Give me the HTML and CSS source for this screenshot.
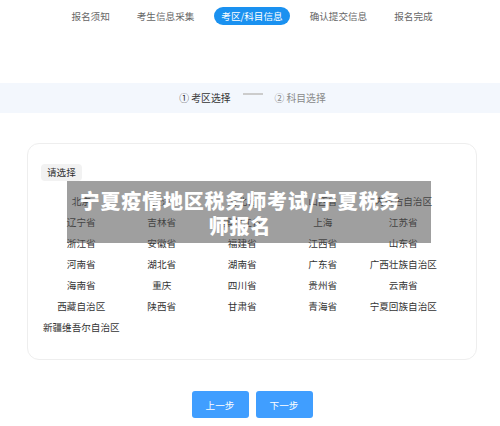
FILE: index.html
```html
<!DOCTYPE html>
<html lang="zh-CN">
<head>
    <meta charset="UTF-8">
    <meta name="viewport" content="width=device-width, initial-scale=1.0">
    <title>考区/科目信息</title>
    <link rel="stylesheet" href="styles.css">
</head>
<body>
    <!-- 报名流程 -->
    <div class="steps">
        <span class="step">报名须知</span>
        <span class="step">考生信息采集</span>
        <span class="step active">考区/科目信息</span>
        <span class="step">确认提交信息</span>
        <span class="step">报名完成</span>
    </div>

    <!-- 子步骤 -->
    <div class="substeps">
        <span class="sub current">① 考区选择</span>
        <span class="sub-line"></span>
        <span class="sub">② 科目选择</span>
    </div>

    <div class="card">
        <div class="chip">请选择</div>
        <div class="areas">
            <span>北京</span><span>天津</span><span>河北省</span><span>山西省</span><span>内蒙古自治区</span>
            <span>辽宁省</span><span>吉林省</span><span>黑龙江省</span><span>上海</span><span>江苏省</span>
            <span>浙江省</span><span>安徽省</span><span>福建省</span><span>江西省</span><span>山东省</span>
            <span>河南省</span><span>湖北省</span><span>湖南省</span><span>广东省</span><span>广西壮族自治区</span>
            <span>海南省</span><span>重庆</span><span>四川省</span><span>贵州省</span><span>云南省</span>
            <span>西藏自治区</span><span>陕西省</span><span>甘肃省</span><span>青海省</span><span>宁夏回族自治区</span>
            <span>新疆维吾尔自治区</span>
        </div>
        <div class="banner">
            <h1>宁夏疫情地区税务师考试/宁夏税务师报名</h1>
        </div>
    </div>

    <div class="controls">
        <button class="btn">上一步</button>
        <button class="btn">下一步</button>
    </div>
</body>
</html>
```

FILE: styles.css
```css
body {
    margin: 0;
    padding: 0;
    background: #fff;
    font-family: "Noto Sans CJK SC", "Noto Sans", sans-serif;
    font-size: 9.6px;
    color: #333;
}

.steps {
    display: flex;
    justify-content: center;
    align-items: center;
    gap: 13px;
    height: 32px;
    padding-left: 4px;
    margin-bottom: 51px;
}

.step {
    padding: 0 7px;
    height: 18px;
    line-height: 18px;
    color: #666;
    border-radius: 9px;
}

.step.active {
    background-color: #1a91f0;
    color: #fff;
}

.substeps {
    display: flex;
    justify-content: center;
    align-items: center;
    gap: 12px;
    height: 30px;
    background-color: #f3f7fd;
    padding-left: 5px;
}

.sub {
    color: #888;
    font-size: 9.8px;
}

.sub.current {
    color: #333;
}

.sub-line {
    width: 20px;
    height: 2px;
    background-color: #ccc;
    margin-bottom: 8px;
}

.card {
    position: relative;
    margin: 30px 0 0 27px;
    width: 450px;
    height: 217px;
    box-sizing: border-box;
    border: 1px solid #eee;
    border-radius: 12px;
    padding: 20px 0 0 13px;
}

.chip {
    display: inline-block;
    height: 17px;
    line-height: 17px;
    padding: 0 6px;
    background-color: #f2f2f2;
    border-radius: 4px;
    color: #333;
}

.areas {
    display: grid;
    grid-template-columns: repeat(5, 80.5px);
    grid-auto-rows: 21px;
    margin-top: 10px;
}

.areas span {
    text-align: center;
    line-height: 21px;
    white-space: nowrap;
}

/* 标题遮罩 */
.banner {
    position: absolute;
    left: 39px;
    top: 37px;
    width: 364px;
    height: 62px;
    box-sizing: border-box;
    padding: 2px 28px 0 10px;
    background: rgba(80, 80, 80, 0.55);
    display: flex;
    align-items: center;
}

.banner h1 {
    margin: 0;
    width: 100%;
    text-align: center;
    color: #fff;
    font-size: 20px;
    font-weight: 900;
    line-height: 25px;
    letter-spacing: 0.8px;
}

.controls {
    display: flex;
    justify-content: center;
    gap: 7px;
    margin-top: 31px;
    padding-left: 4px;
}

.btn {
    width: 57px;
    height: 27px;
    border: none;
    border-radius: 3px;
    background-color: #409eff;
    color: #fff;
    font-family: inherit;
    font-size: 9.6px;
    cursor: pointer;
}
```
